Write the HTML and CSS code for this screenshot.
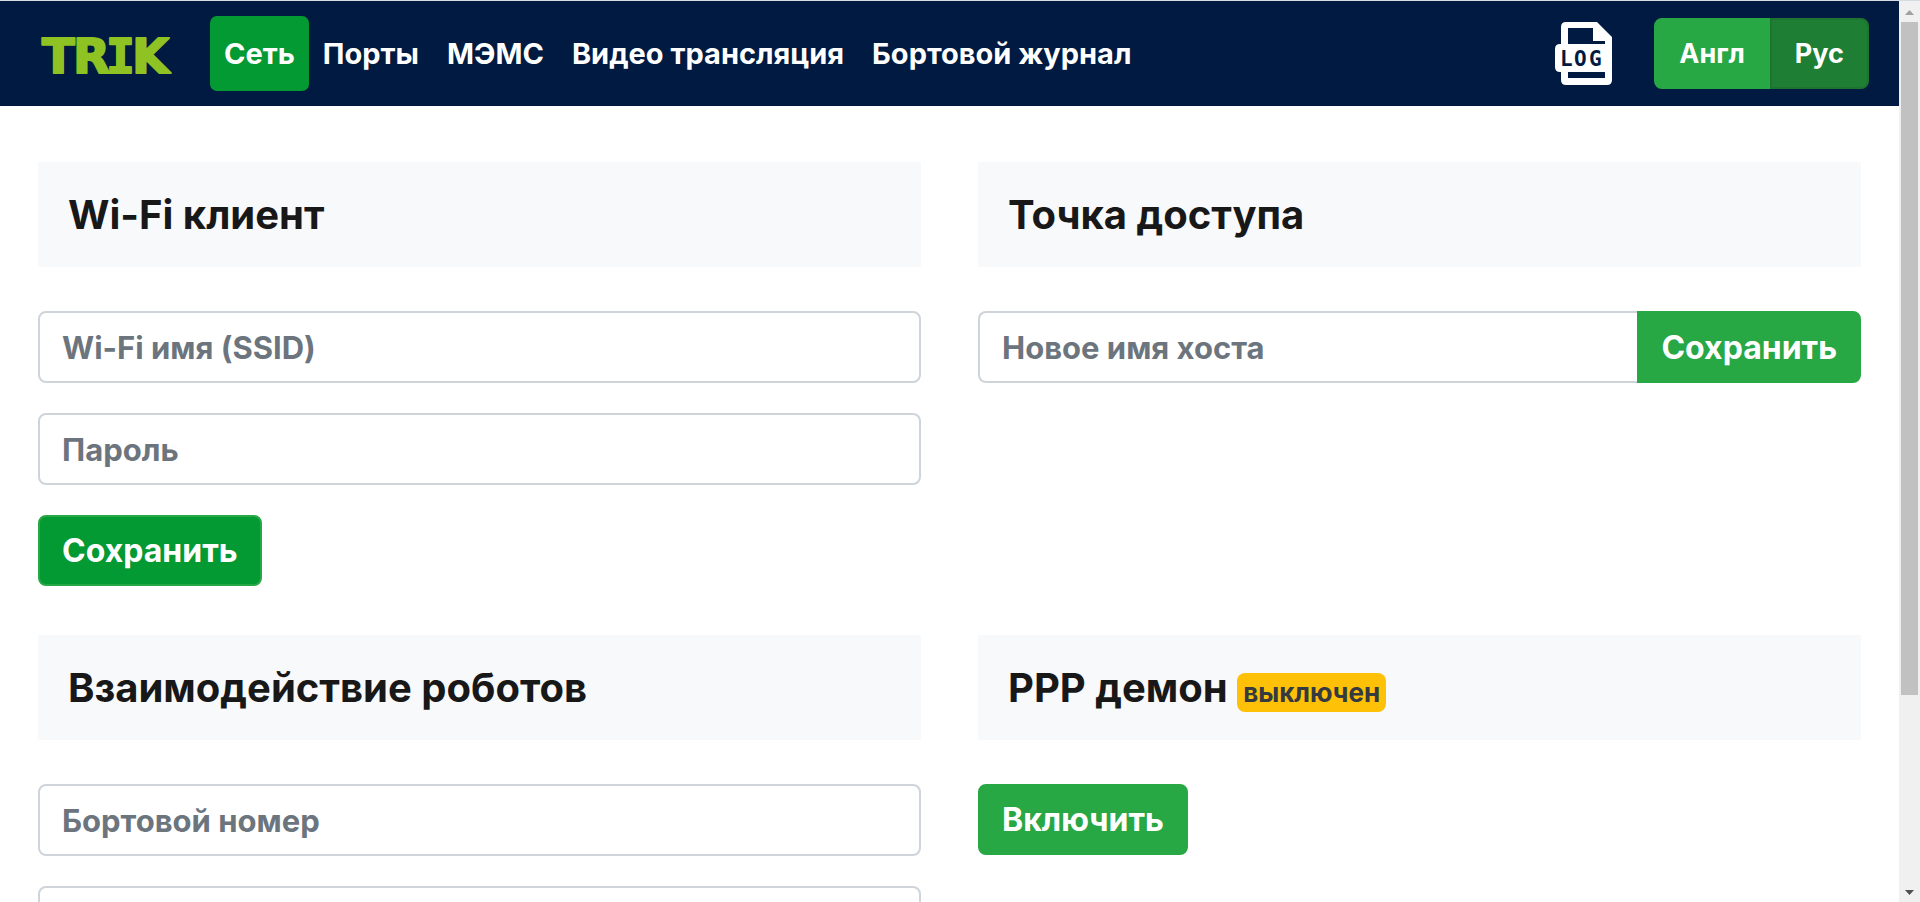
FILE: index.html
```html
<!DOCTYPE html>
<html lang="ru">
<head>
<meta charset="utf-8">
<title>TRIK</title>
<link rel="stylesheet" href="styles.css">
</head>
<body>
<div class="page">
  <header class="navbar">
    <a class="brand" href="#" aria-label="TRIK">
      <svg class="brand-logo" viewBox="0 0 134 46" aria-hidden="true"><text class="brand-text" x="5 36 69 95" y="42">TR<tspan class="brand-slab">I</tspan>K</text></svg>
    </a>
    <nav class="nav">
      <a class="nav-link active" href="#">Сеть</a>
      <a class="nav-link" href="#">Порты</a>
      <a class="nav-link" href="#">МЭМС</a>
      <a class="nav-link" href="#">Видео трансляция</a>
      <a class="nav-link" href="#">Бортовой журнал</a>
    </nav>
    <a class="log-link" href="#" aria-label="LOG">
      <svg class="log-icon" viewBox="0 0 57 63" aria-hidden="true">
        <path fill="#fff" fill-rule="evenodd" d="M11 0H42L57 15V58Q57 63 52 63H11Q6 63 6 58V50H5Q0 50 0 45V27Q0 22 5 22H6V5Q6 0 11 0ZM13 6V22H50V19H38V6ZM13 50V56H50V50Z"/>
        <text class="log-text" x="5 19 34" y="44">LOG</text>
      </svg>
    </a>
    <div class="lang">
      <button class="lang-btn" type="button">Англ</button>
      <button class="lang-btn selected" type="button">Рус</button>
    </div>
  </header>
  <main class="content">
    <section class="section">
      <h2 class="section-title">Wi-Fi клиент</h2>
      <form class="form">
        <input class="field" type="text" placeholder="Wi-Fi имя (SSID)" aria-label="Wi-Fi имя (SSID)">
        <input class="field" type="text" placeholder="Пароль" aria-label="Пароль">
        <button class="btn btn-deep" type="button">Сохранить</button>
      </form>
    </section>
    <section class="section">
      <h2 class="section-title">Точка доступа</h2>
      <form class="form">
        <div class="group">
          <input class="field" type="text" placeholder="Новое имя хоста" aria-label="Новое имя хоста">
          <button class="btn" type="button">Сохранить</button>
        </div>
      </form>
    </section>
    <section class="section">
      <h2 class="section-title">Взаимодействие роботов</h2>
      <form class="form">
        <input class="field" type="text" placeholder="Бортовой номер" aria-label="Бортовой номер">
        <input class="field" type="text" aria-label="Адрес">
      </form>
    </section>
    <section class="section">
      <h2 class="section-title">PPP демон <span class="badge">выключен</span></h2>
      <form class="form">
        <button class="btn" type="button">Включить</button>
      </form>
    </section>
  </main>
</div>
<div class="scrollbar" aria-hidden="true">
  <svg class="arrow" viewBox="0 0 21 21"><path fill="#a0a0a0" d="M6 14L10.500 9L15 14Z"/></svg>
  <div class="track"><div class="thumb"></div></div>
  <svg class="arrow" viewBox="0 0 21 21"><path fill="#505050" d="M6 9H15L10.500 14Z"/></svg>
</div>
</body>
</html>
```
FILE: styles.css
```css
* { box-sizing: border-box; }

body {
  margin: 0;
  height: 100vh;
  overflow: hidden;
  display: flex;
  border-top: 1px solid #d5dcdf;
  background: #fff;
  color: #181818;
  font: 700 31px/45px Inter, "Open Sans", sans-serif;
}

.page { flex: 1; min-width: 0; overflow: hidden; }

.navbar {
  display: flex;
  align-items: center;
  padding: 15px 30px 15px 37px;
  background: #001a41;
}

.brand { display: flex; margin-right: 39px; }
.brand-logo { width: 134px; height: 46px; overflow: visible; }
.brand-text {
  font: 700 48px "DejaVu Sans", sans-serif;
  fill: #8fc324;
  stroke: #8fc324;
  stroke-width: 2px;
  stroke-linejoin: round;
}
.brand-slab { font-family: "DejaVu Sans Mono", monospace; }

.nav { display: flex; flex: 1; }
.nav-link {
  padding: 15px 14px;
  border-radius: 7px;
  color: #fff;
  font-size: 29px;
  text-decoration: none;
  white-space: nowrap;
}
.nav-link.active { background: #039933; }

.log-link { display: flex; margin-right: 42px; }
.log-icon { width: 57px; height: 63px; }
.log-text { font: 700 21px "DejaVu Sans Mono", monospace; fill: #001a41; }

.lang { display: flex; }
.lang-btn {
  padding: 11px 23px;
  border: 2px solid #28a745;
  border-radius: 8px 0 0 8px;
  background: #28a745;
  color: #fff;
  font: inherit;
  font-size: 27px;
}
.lang-btn.selected {
  border-color: #1c7430;
  border-radius: 0 8px 8px 0;
  background: #1e7e34;
}

.content {
  display: grid;
  grid-template-columns: 1fr 1fr;
  gap: 49px 57px;
  padding: 56px 38px 0;
}

.section-title {
  margin: 0 0 44px;
  padding: 30px;
  background: #f8f9fb;
  font-size: 40px;
  line-height: 45px;
}

.badge {
  padding: 4px 6px;
  border-radius: 8px;
  background: #ffc107;
  color: #343a40;
  font-size: 26px;
  line-height: 1;
}

.form { display: flex; flex-direction: column; align-items: flex-start; gap: 30px; }

.field {
  width: 100%;
  min-width: 0;
  height: 72px;
  padding: 11px 22px;
  border: 2px solid #ced4da;
  border-radius: 8px;
  background: #fff;
  color: #495057;
  font: inherit;
}
.field::placeholder { color: #6c757d; opacity: 1; }

.btn {
  padding: 11px 22px;
  border: 2px solid #28a745;
  border-radius: 8px;
  background: #28a745;
  color: #fff;
  font: inherit;
  font-size: 32px;
  white-space: nowrap;
}
.btn-deep { background: #039933; }

.group { display: flex; width: 100%; }
.group .field { flex: 1; border-right: 0; border-radius: 8px 0 0 8px; }
.group .btn { border-radius: 0 8px 8px 0; }

.scrollbar {
  display: flex;
  flex-direction: column;
  width: 21px;
  background: #f0f0f0;
}
.arrow { width: 21px; height: 21px; }
.track { flex: 1; padding: 0 2px; }
.thumb { height: 78.3%; background: #c1c1c1; }
```
